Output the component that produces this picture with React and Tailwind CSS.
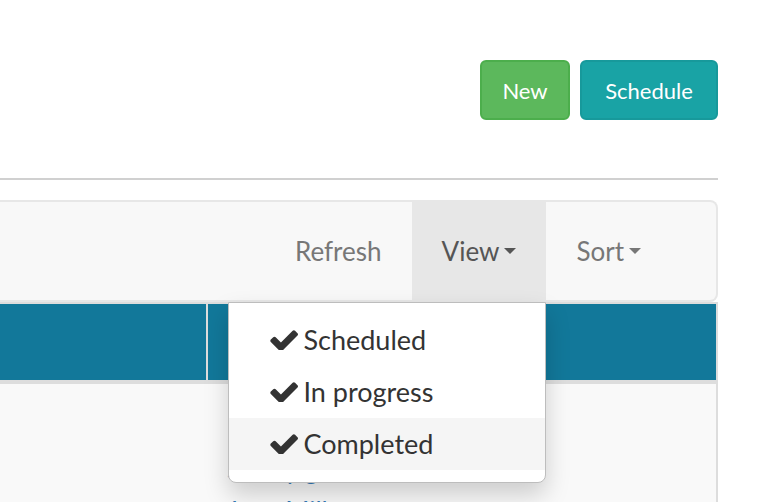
import React from "react";

function Check() {
    return (
        <svg width="28" height="20" viewBox="103 338 1568 1088" className="shrink-0">
            <path
                fill="#333"
                d="M1671 566q0 40-28 68l-724 724-136 136q-28 28-68 28t-68-28l-136-136-362-362q-28-28-28-68t28-68l136-136q28-28 68-28t68 28l294 295 656-657q28-28 68-28t68 28l136 136q28 28 28 68z"
            />
        </svg>
    );
}

function Caret() {
    return <span className="ml-[5px] inline-block w-0 h-0 border-l-[6px] border-r-[6px] border-t-[6px] border-l-transparent border-r-transparent border-t-current align-middle" />;
}

const filters = ["Scheduled", "In progress", "Completed"];

export default function App() {
    return (
        <div className="w-[778px] h-[502px] overflow-hidden bg-white font-['Lato','Open_Sans',sans-serif]">
            <div className="pr-[60px]">
                <div className="flex justify-end gap-[10px] pt-[60px]">
                    <button className="w-[90px] h-[60px] rounded-[6px] bg-[#5cb85c] border-2 border-[#4cae4c] text-white text-[22px]">New</button>
                    <button className="w-[138px] h-[60px] rounded-[6px] bg-[#19a3a5] border-2 border-[#17999b] text-white text-[22px]">Schedule</button>
                </div>

                <div className="mt-[58px] border-t-2 border-[#d0d0d0]" />

                <div className="mt-[20px] h-[102px] flex justify-end bg-[#f8f8f8] border-2 border-l-0 border-[#e7e7e7] rounded-r-[8px] pr-[45px] text-[26px] text-[#777]">
                    <div className="h-full flex items-center px-[30px]">Refresh</div>
                    <div className="relative h-full">
                        <div className="h-full flex items-center px-[30px] bg-[#e7e7e7] text-[#555]">
                            View
                            <Caret />
                        </div>
                        <div className="absolute right-0 top-[calc(100%+2px)] z-10 w-[318px] bg-white border border-[#bdbdbd] rounded-b-[8px] pt-[11px] pb-[12px] shadow-[0_12px_24px_rgba(0,0,0,0.175)]">
                            {filters.map((f, i) => (
                                <div key={f} className={`h-[52px] flex items-center gap-[5px] pl-[41px] text-[27px] text-[#333] ${i === 2 ? "bg-[#f5f5f5]" : ""}`}>
                                    <Check />
                                    <span>{f}</span>
                                </div>
                            ))}
                        </div>
                    </div>
                    <div className="h-full flex items-center px-[30px]">
                        Sort
                        <Caret />
                    </div>
                </div>

                <div className="border-t-2 border-r-2 border-[#ddd]">
                    <div className="flex h-[80px] bg-[#12789a] border-b-4 border-[#ddd]">
                        <div className="w-[208px] border-r-2 border-[#ddd]" />
                        <div className="flex-1" />
                    </div>
                    <div className="flex h-[200px] bg-[#f9f9f9]">
                        <div className="w-[210px]" />
                        <div className="flex-1 pl-[17px] pt-[22px] text-[26px] leading-[42px] text-[#337ab7]">
                            <div>Inventory check</div>
                            <div>Safety gear check</div>
                            <div>Jane Miller</div>
                        </div>
                    </div>
                </div>
            </div>
        </div>
    );
}
